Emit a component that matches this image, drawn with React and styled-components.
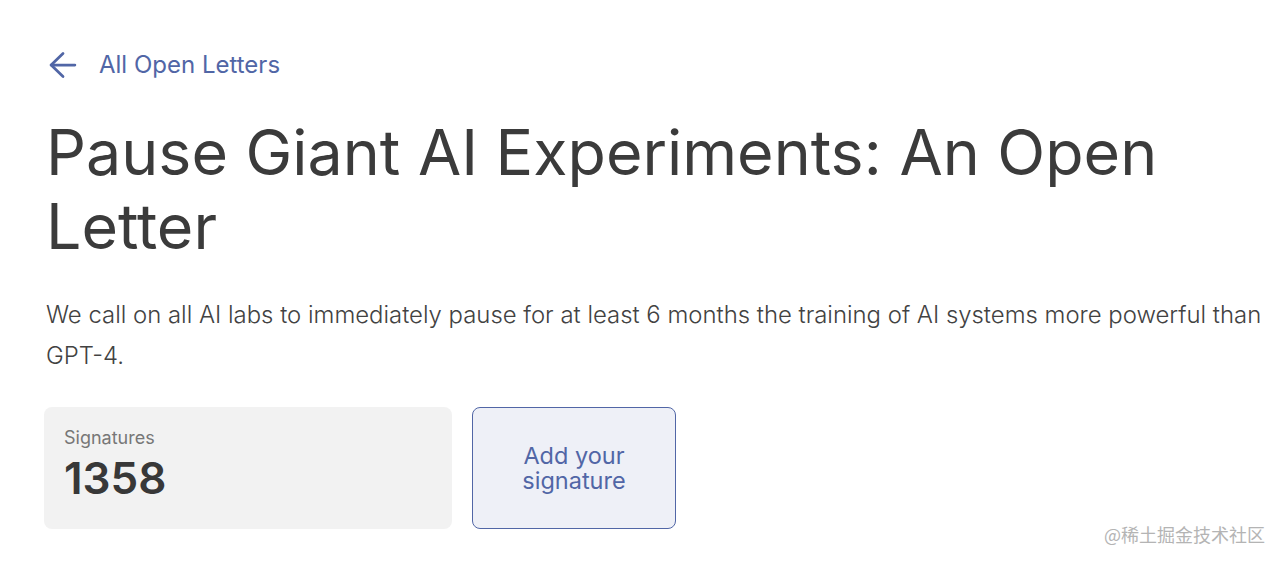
import React from 'react'
import styled, { createGlobalStyle } from 'styled-components'

const GlobalStyle = createGlobalStyle`
  html, body {
    margin: 0;
    padding: 0;
    background: #fff;
    font-family: Inter, "Noto Sans", sans-serif;
  }
`

const Page = styled.main`
  position: relative;
  width: 1282px;
  height: 564px;
  box-sizing: border-box;
  padding: 49px 16px 0 46px;
  overflow: hidden;
`

const BackLink = styled.a`
  display: flex;
  align-items: center;
  gap: 21px;
  margin-left: 2px;
  color: #5166a6;
  font-size: 24px;
  line-height: 32px;
  text-decoration: none;
`

const Title = styled.h1`
  margin: 34px 0 0;
  font-size: 62.7px;
  font-weight: 400;
  line-height: 74px;
  color: #3b3b3b;
`

const Lead = styled.p`
  margin: 31px 0 0;
  font-size: 23.9px;
  font-weight: 300;
  line-height: 41px;
  color: #424242;
`

const Row = styled.div`
  display: flex;
  gap: 20px;
  margin-top: 31px;
  margin-left: -2px;
`

const Stat = styled.div`
  width: 408px;
  height: 122px;
  box-sizing: border-box;
  padding: 20px 20px;
  background: #f2f2f2;
  border-radius: 8px;
`

const StatLabel = styled.div`
  font-size: 18px;
  line-height: 22px;
  color: #777;
`

const StatValue = styled.div`
  margin-top: 4px;
  font-size: 44px;
  font-weight: 600;
  line-height: 50px;
  color: #383838;
`

const SignButton = styled.button`
  width: 204px;
  height: 122px;
  box-sizing: border-box;
  border: 1px solid #5166a6;
  border-radius: 8px;
  background: #eef0f7;
  color: #5166a6;
  font-family: Inter, "Noto Sans", sans-serif;
  font-size: 23.5px;
  line-height: 25px;
  padding: 0 30px;
  cursor: pointer;
`

const Watermark = styled.div`
  position: absolute;
  right: 17px;
  bottom: 17px;
  font-family: "Noto Sans CJK SC", "Noto Sans", sans-serif;
  font-size: 18px;
  color: #b4b4b4;
`

const ArrowLeft = () => (
  <svg width="30" height="30" viewBox="0 0 24 24" fill="none" stroke="currentColor" strokeWidth="2.2" strokeLinecap="round" strokeLinejoin="round">
    <path d="M21.5 12H2.5" />
    <path d="M12 2.8L2.5 12l9.5 9.2" />
  </svg>
)

export default function App() {
  return (
    <>
      <GlobalStyle />
      <Page>
        <BackLink href="#">
          <ArrowLeft />
          All Open Letters
        </BackLink>
        <Title>Pause Giant AI Experiments: An Open Letter</Title>
        <Lead>
          We call on all AI labs to immediately pause for at least 6 months the training of AI systems more powerful than GPT-4.
        </Lead>
        <Row>
          <Stat>
            <StatLabel>Signatures</StatLabel>
            <StatValue>1358</StatValue>
          </Stat>
          <SignButton>Add your signature</SignButton>
        </Row>
        <Watermark>@稀土掘金技术社区</Watermark>
      </Page>
    </>
  )
}
